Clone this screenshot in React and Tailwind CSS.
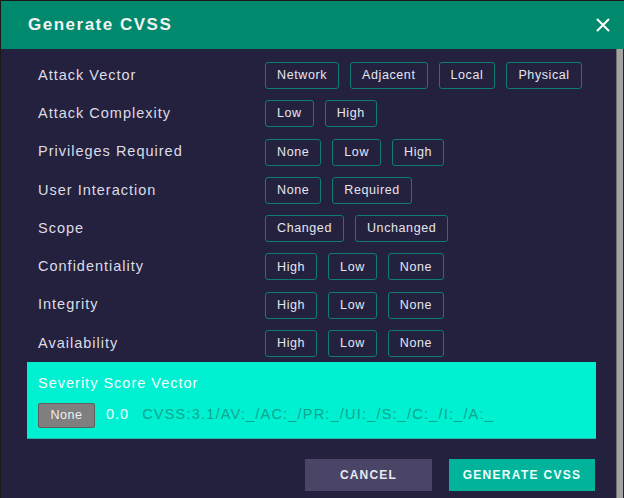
import React from "react";

const rows = [
  { label: "Attack Vector", options: ["Network", "Adjacent", "Local", "Physical"] },
  { label: "Attack Complexity", options: ["Low", "High"] },
  { label: "Privileges Required", options: ["None", "Low", "High"] },
  { label: "User Interaction", options: ["None", "Required"] },
  { label: "Scope", options: ["Changed", "Unchanged"] },
  { label: "Confidentiality", options: ["High", "Low", "None"] },
  { label: "Integrity", options: ["High", "Low", "None"] },
  { label: "Availability", options: ["High", "Low", "None"] },
];

const font = { fontFamily: '"Liberation Sans", Arial, sans-serif' };

export default function App() {
  return (
    <div
      className="w-[624px] h-[498px] bg-[#24213f] flex flex-col overflow-hidden border-l border-t border-[#1a1a1a]"
      style={font}
    >
      <div className="h-[48px] bg-[#00896d] flex items-center justify-between pl-[27px] pr-[14px] shrink-0">
        <h2 className="text-[17px] font-bold text-[#f2f2f2] tracking-[1.5px]">Generate CVSS</h2>
        <svg width="14" height="14" viewBox="0 0 14 14" className="text-white">
          <path d="M1.5 1.5 L12.5 12.5 M12.5 1.5 L1.5 12.5" stroke="currentColor" strokeWidth="2" strokeLinecap="round" />
        </svg>
      </div>

      <div className="flex flex-1 min-h-0">
        <div className="flex-1 flex flex-col pl-[26px] pr-[20px]">
          <div className="flex flex-col gap-[11.3px] pt-[13px] pl-[11px]">
            {rows.map((row) => (
              <div key={row.label} className="flex items-center h-[27px]">
                <span className="w-[227px] text-[14.5px] tracking-[1px] text-[#dcdce4]">{row.label}</span>
                <div className="flex gap-[11px]">
                  {row.options.map((opt) => (
                    <button
                      key={opt}
                      className="h-[27px] px-[11px] border-[1.5px] border-[#0e7c70] rounded-[3px] text-[12.5px] tracking-[0.6px] text-[#e6e6ee]"
                    >
                      {opt}
                    </button>
                  ))}
                </div>
              </div>
            ))}
          </div>

          <div className="mt-[5px] bg-[#00f0d2] h-[77px] flex flex-col pl-[11px] pt-[11px] border-b border-[#1fb8a8]">
            <span className="text-[14.5px] tracking-[1px] text-[#f4fffd]">Severity Score Vector</span>
            <div className="flex items-center mt-[8px]">
              <span className="w-[57px] h-[25px] bg-[#7f7f7f] border border-[#5e5e5e] rounded-[2px] text-[12.5px] tracking-[0.5px] text-[#f0f0f0] flex items-center justify-center">
                None
              </span>
              <span className="ml-[11px] text-[14.5px] tracking-[1px] text-[#f4fffd]">0.0</span>
              <span className="ml-[13px] text-[14.5px] tracking-[1.2px] text-[#0fa68d]">CVSS:3.1/AV:_/AC:_/PR:_/UI:_/S:_/C:_/I:_/A:_</span>
            </div>
          </div>

          <div className="flex justify-end gap-[17px] mt-[20px] pr-[1px]">
            <button className="w-[127px] h-[32px] bg-[#4a4566] text-[12px] font-bold text-[#e8e8f0] tracking-[1.2px]">
              CANCEL
            </button>
            <button className="w-[146px] h-[32px] bg-[#00b39a] text-[12px] font-bold text-[#f0fffb] tracking-[1.3px]">
              GENERATE CVSS
            </button>
          </div>
        </div>
        <div className="w-[7px] bg-[#a3a3a3] border-l border-[#6f6f6f] shrink-0 mr-[1px]" />
      </div>
    </div>
  );
}
